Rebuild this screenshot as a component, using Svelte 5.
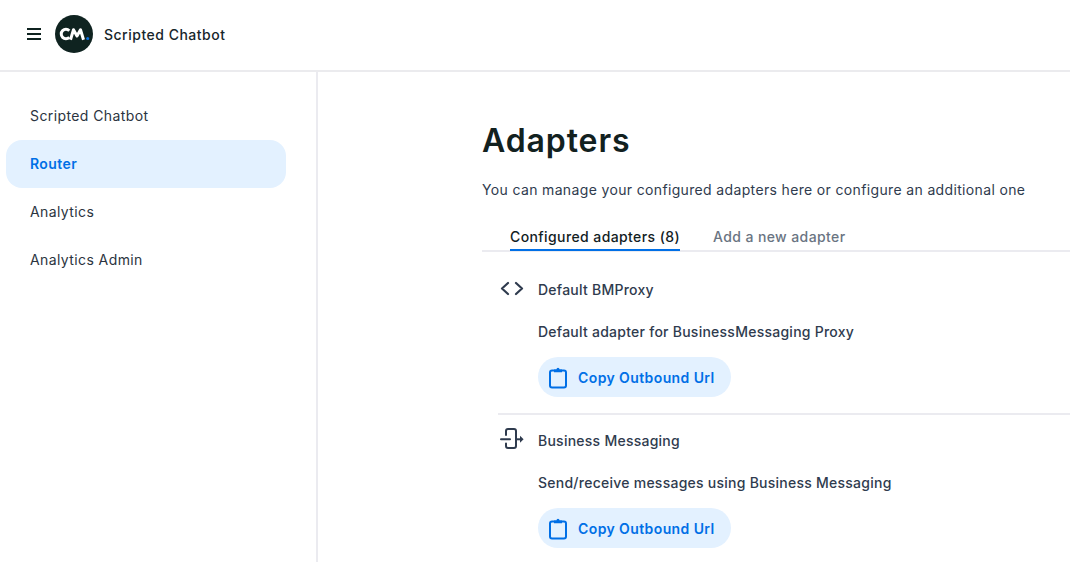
<script lang="ts">
  const navItems = ['Scripted Chatbot', 'Router', 'Analytics', 'Analytics Admin'];
  const adapters = [
    { name: 'Default BMProxy', description: 'Default adapter for BusinessMessaging Proxy', icon: 'code' },
    { name: 'Business Messaging', description: 'Send/receive messages using Business Messaging', icon: 'exit' }
  ];
</script>

<div class="page">
  <header class="topbar">
    <button class="menu" aria-label="Menu">
      <span></span><span></span><span></span>
    </button>
    <svg class="logo" viewBox="0 0 38 38" width="38" height="38" aria-label="CM logo">
      <circle cx="19" cy="19" r="19" fill="#0f2320" />
      <path d="M14.300 15.700a4.700 4.700 0 1 0 0 6.600" fill="none" stroke="#fff" stroke-width="3" />
      <path d="M15.500 24.800 18.500 14.800 22 21 25.500 14.800 28.500 24.800" fill="none" stroke="#fff" stroke-width="3" stroke-linejoin="round" />
      <circle cx="32.700" cy="23.500" r="1.500" fill="#0a6fe0" />
    </svg>
    <span class="product">Scripted Chatbot</span>
  </header>

  <div class="body">
    <nav class="sidebar">
      {#each navItems as item}
        <a class="nav-item" class:active={item === 'Router'} href="#top">{item}</a>
      {/each}
    </nav>

    <main class="content">
      <h1>Adapters</h1>
      <p class="intro">You can manage your configured adapters here or configure an additional one</p>

      <div class="tabs">
        <span class="tab selected">Configured adapters (8)</span>
        <span class="tab">Add a new adapter</span>
      </div>

      {#each adapters as adapter, i}
        <section class="adapter" class:divided={i > 0}>
          <div class="adapter-head">
            {#if adapter.icon === 'code'}
              <svg class="adapter-icon" viewBox="0 0 28 24" width="28" height="24">
                <path d="M10 6 4 11.500l6 5.500M18 6l6 5.500-6 5.500" fill="none" stroke="#2f3b4e" stroke-width="2.200" stroke-linecap="round" stroke-linejoin="round" />
              </svg>
            {:else}
              <svg class="adapter-icon" viewBox="0 -1 28 24" width="28" height="24">
                <path d="M8 6V2a2 2 0 0 1 2-2h6a2 2 0 0 1 2 2v15a2 2 0 0 1-2 2h-6a2 2 0 0 1-2-2v-2.500" fill="none" stroke="#2f3b4e" stroke-width="2" stroke-linecap="round" />
                <path d="M3 10.300h9" fill="none" stroke="#2f3b4e" stroke-width="2" stroke-linecap="round" />
                <path d="M18 10.300h5" fill="none" stroke="#2f3b4e" stroke-width="2" />
                <path d="M22 6.800 25.600 10.300 22 13.800z" fill="#2f3b4e" />
              </svg>
            {/if}
            <span class="adapter-name">{adapter.name}</span>
          </div>
          <p class="adapter-desc">{adapter.description}</p>
          <button class="copy">
            <svg viewBox="0 0 18 23" width="18" height="23">
              <path d="M5 4.500H3a2 2 0 0 0-2 2V19.500a2 2 0 0 0 2 2h12a2 2 0 0 0 2-2V6.500a2 2 0 0 0-2-2H13" fill="none" stroke="#006fe6" stroke-width="2" />
              <path d="M5 3.300h2.500a1.500 1.500 0 0 1 3 0H13V6.200H5z" fill="#006fe6" />
            </svg>
            Copy Outbound Url
          </button>
        </section>
      {/each}
    </main>
  </div>
</div>

<style>
  :global(body) {
    margin: 0;
    background: #fff;
    overflow: hidden;
  }

  .page {
    height: 562px;
    display: flex;
    flex-direction: column;
    font-family: Inter, "Liberation Sans", sans-serif;
    color: #2f3b4e;
  }

  .topbar {
    flex-shrink: 0;
    display: flex;
    align-items: center;
    padding: 0 0 2px 27px;
    height: 68px;
    border-bottom: 2px solid #ebebee;
  }

  .menu {
    width: 14px;
    height: 12px;
    padding: 0;
    border: 0;
    background: none;
    display: flex;
    flex-direction: column;
    justify-content: space-between;
    margin-right: 14px;
  }

  .menu span {
    display: block;
    height: 2px;
    background: #0f2320;
  }

  .product {
    margin-left: 11px;
    font-size: 14px;
    font-weight: 500;
    letter-spacing: 0.5px;
    color: #17262b;
  }

  .body {
    flex: 1;
    display: flex;
    min-height: 0;
  }

  .sidebar {
    width: 318px;
    flex-shrink: 0;
    box-sizing: border-box;
    border-right: 2px solid #ebebf0;
    padding: 20px 30px 0 6px;
    display: flex;
    flex-direction: column;
  }

  .nav-item {
    height: 48px;
    box-sizing: border-box;
    padding: 0 0 2px 24px;
    display: flex;
    align-items: center;
    border-radius: 16px;
    font-size: 14px;
    letter-spacing: 0.4px;
    color: #2b3440;
    text-decoration: none;
  }

  .nav-item.active {
    background: #e3f1ff;
    color: #006fe6;
    font-weight: 600;
  }

  .content {
    flex: 1;
    min-width: 0;
    padding: 0 0 0 164px;
  }

  h1 {
    margin: 49px 0 0;
    font-size: 32px;
    line-height: 40px;
    font-weight: 600;
    letter-spacing: 0.9px;
    color: #12211f;
  }

  .intro {
    margin: 19px 0 0;
    font-size: 14px;
    line-height: 20px;
    letter-spacing: 0.35px;
    color: #2f3b4e;
  }

  .tabs {
    margin-top: 20px;
    display: flex;
    gap: 33px;
    padding-left: 28px;
    border-bottom: 2px solid #ebebf0;
    height: 30px;
  }

  .tab {
    font-size: 14px;
    line-height: 34px;
    height: 30px;
    box-sizing: border-box;
    font-weight: 500;
    letter-spacing: 0.4px;
    color: #6a7482;
  }

  .tab.selected {
    color: #12211f;
    border-bottom: 2px solid #006fe6;
    margin-bottom: -1px;
    height: 31px;
  }

  .adapter {
    margin-left: 16px;
    padding-bottom: 16px;
  }

  .adapter.divided {
    border-top: 2px solid #ebebf0;
  }

  .adapter-head {
    display: flex;
    align-items: center;
    height: 24px;
    padding-top: 25px;
  }

  .adapter.divided .adapter-head {
    padding-top: 13px;
  }

  .adapter-icon {
    flex-shrink: 0;
    margin-right: 12px;
  }

  .adapter-name,
  .adapter-desc {
    font-size: 14px;
    font-weight: 500;
    letter-spacing: 0.25px;
    color: #2f3b4e;
  }

  .adapter-desc {
    margin: 21px 0 0 40px;
    line-height: 20px;
  }

  .copy {
    margin: 15px 0 0 40px;
    height: 40px;
    padding: 0 16px 0 11px;
    border: 0;
    border-radius: 20px;
    background: #e3f1ff;
    color: #006fe6;
    font: 600 14px Inter, "Liberation Sans", sans-serif;
    letter-spacing: 0.4px;
    display: flex;
    align-items: center;
    gap: 11px;
  }
</style>
